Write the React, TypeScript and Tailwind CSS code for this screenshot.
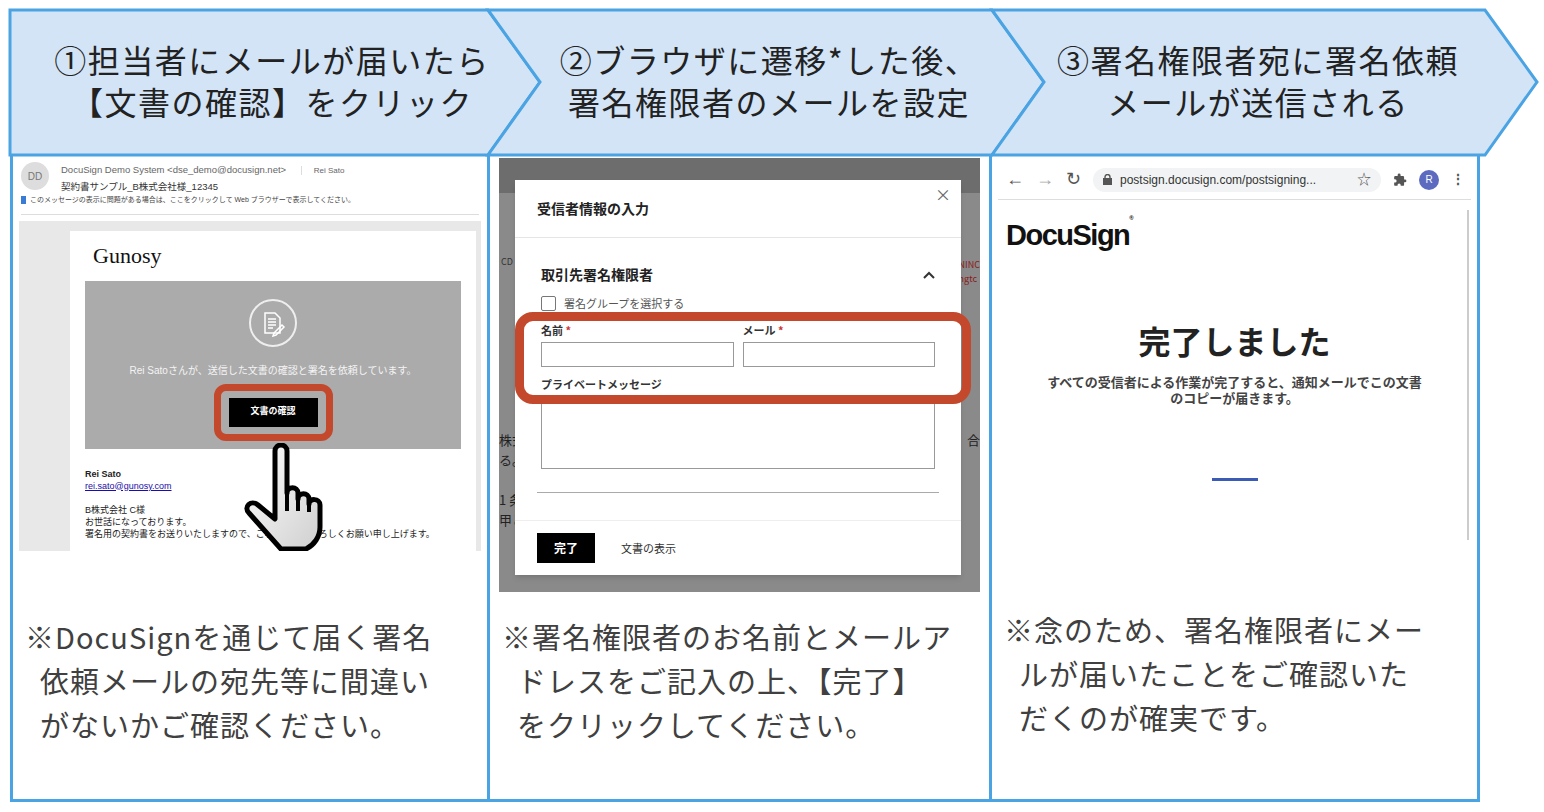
const jp = { fontFamily: '"Noto Sans CJK JP", "Noto Sans", sans-serif' };

function Chevrons() {
  return (
    <svg className="absolute left-0 top-0" width="1544" height="160" viewBox="0 0 1544 160">
      <g fill="#d2e4f6" stroke="#4aa3e2" strokeWidth="3" strokeLinejoin="miter">
        <polygon points="10,10 488,10 540,82 488,155 10,155" />
        <polygon points="488,10 992,10 1044,82 992,155 488,155 540,82" />
        <polygon points="992,10 1485,10 1537,82 1485,155 992,155 1044,82" />
      </g>
    </svg>
  );
}

function EmailShot() {
  return (
    <div className="mx-[6px] mt-[3px] h-[394px] bg-white text-[#444] relative overflow-hidden" style={{ fontFamily: '"Liberation Sans", "Noto Sans CJK JP", sans-serif' }}>
      <div className="flex gap-3 pl-[2px] pt-[4px]">
        <div className="w-[28px] h-[28px] rounded-full bg-[#ddd] text-[10px] text-[#777] flex items-center justify-center">DD</div>
        <div className="text-[9.5px] leading-[16px] text-[#666]">
          <div>DocuSign Demo System &lt;dse_demo@docusign.net&gt; <span className="ml-3 text-[8px] border-l border-[#ddd] pl-3">Rei Sato</span></div>
          <div className="text-[#333]">契約書サンプル_B株式会社様_12345</div>
        </div>
      </div>
      <div className="text-[7px] text-[#444] pl-[2px] flex items-center gap-1"><span className="w-[5px] h-[8px] bg-[#3a7bd5] inline-block" />このメッセージの表示に問題がある場合は、ここをクリックして Web ブラウザーで表示してください。</div>
      <div className="border-t border-[#ddd] mt-[8px] mx-[2px]" />
      <div className="bg-[#e8e8e8] mt-[6px] h-[330px] pl-[51px] pr-[5px] pt-[10px]">
        <div className="bg-white h-full px-[15px]">
          <div className="pt-[8px] pl-[8px] text-[22px] text-[#111] h-[50px]" style={{ fontFamily: '"Liberation Serif", serif' }}>Gunosy</div>
          <div className="bg-[#ababab] h-[168px] flex flex-col items-center pt-[18px]">
            <div className="w-[48px] h-[48px] rounded-full border-2 border-white/80 flex items-center justify-center">
              <svg width="26" height="28" viewBox="0 0 26 28" fill="none" stroke="white" strokeWidth="1.5">
                <path d="M5 4h10l5 5v15H5z" /><path d="M8 10h8M8 13h8M8 16h8M8 19h5" /><path d="M14 24l8-8 2 2-8 8-3 1z" />
              </svg>
            </div>
            <div className="text-[10px] text-[#f4f4f4] mt-[16px]">Rei Satoさんが、送信した文書の確認と署名を依頼しています。</div>
            <div className="mt-[6px] rounded-[12px] border-[7px] border-[#c4482c] px-[8px] py-[7px]">
              <div className="bg-black text-white text-[9px] font-bold w-[89px] h-[29px] flex items-center justify-center">文書の確認</div>
            </div>
          </div>
          <div className="text-[9px] leading-[12px] pt-[19px] text-[#222]">
            <div className="font-bold">Rei Sato</div>
            <div className="text-[#1a0dab] underline">rei.sato@gunosy.com</div>
            <div className="mt-[12px]">B株式会社 C様</div>
            <div>お世話になっております。</div>
            <div>署名用の契約書をお送りいたしますので、ご署名の程、よろしくお願い申し上げます。</div>
          </div>
        </div>
      </div>
      <svg className="absolute left-[218px] top-[285px]" width="100" height="108" viewBox="0 0 100 108">
        <defs><linearGradient id="hg" x1="0" y1="0" x2="1" y2="1"><stop offset="0" stopColor="#fff" /><stop offset="1" stopColor="#cfcfcf" /></linearGradient></defs>
        <path d="M38 8c0-8 12-8 12 0v42c0-7 11-7 11 0v6c0-7 11-7 11 0v5c0-6 11-6 11 1v22c0 10-6 18-14 22H44L12 70c-6-6 2-14 9-8l17 14z" fill="url(#hg)" stroke="#000" strokeWidth="5" strokeLinejoin="round" />
        <path d="M50 50v18M61 56v12M72 61v8" stroke="#000" strokeWidth="4" />
      </svg>
    </div>
  );
}

function DialogShot() {
  return (
    <div className="mx-[9px] mt-[3px] h-[434px] bg-[#6d6d6d] relative overflow-hidden" style={jp}>
      <div className="absolute left-0 right-0 top-[35px] bottom-0 bg-[#8a8a8a]" />
      <div className="absolute left-[2px] top-[97px] text-[9px] text-[#333]">CD</div>
      <div className="absolute right-0 top-[100px] text-[9px] text-[#8a1a1a] leading-[14px]">NINC<br />ngtc</div>
      <div className="absolute left-0 top-[272px] text-[13px] text-[#222] leading-[20px]">株式<br />る。<br /><br />1 条<br />甲と</div>
      <div className="absolute right-0 top-[272px] text-[13px] text-[#222]">合</div>
      <div className="absolute left-[16px] top-[22px] w-[446px] h-[395px] bg-white shadow-md flex flex-col">
        <div className="h-[58px] border-b border-[#e5e5e5] flex items-center px-[22px] relative">
          <span className="text-[14px] font-bold text-[#222]">受信者情報の入力</span>
          <span className="absolute right-[10px] top-[2px] text-[16px] text-[#666]">×</span>
        </div>
        <div className="px-[26px] pt-[26px] flex-1 border-b border-[#eee]">
          <div className="flex justify-between items-center">
            <span className="text-[14px] font-bold text-[#222]">取引先署名権限者</span>
            <svg width="12" height="8" viewBox="0 0 12 8"><path d="M1 7l5-5 5 5" stroke="#333" strokeWidth="2" fill="none" /></svg>
          </div>
          <div className="flex items-center gap-2 mt-[10px] text-[11px] text-[#555]">
            <span className="w-[15px] h-[15px] border border-[#777] rounded-[2px]" />署名グループを選択する
          </div>
          <div className="grid grid-cols-2 gap-[9px] mt-[10px] text-[11px] font-bold text-[#333]">
            <div>名前 <span className="text-[#c33]">*</span><div className="mt-[4px] h-[25px] border border-[#999]" /></div>
            <div>メール <span className="text-[#c33]">*</span><div className="mt-[4px] h-[25px] border border-[#999]" /></div>
          </div>
          <div className="mt-[9px] text-[11px] font-bold text-[#333]">プライベートメッセージ</div>
          <div className="mt-[10px] h-[66px] border border-[#999]" />
          <div className="mt-[23px] -mx-[4px] border-t border-[#aaa]" />
        </div>
        <div className="h-[54px] flex items-center px-[22px] gap-[26px]">
          <div className="bg-black text-white text-[12px] font-bold w-[58px] h-[30px] flex items-center justify-center">完了</div>
          <span className="text-[11px] text-[#333]">文書の表示</span>
        </div>
      </div>
      <div className="absolute left-[16px] top-[154px] w-[456px] h-[92px] rounded-[18px] border-[9px] border-[#c4482c]" />
    </div>
  );
}

function BrowserShot() {
  return (
    <div className="mx-[6px] mt-[5px] h-[385px] bg-white relative" style={{ fontFamily: '"Liberation Sans", "Noto Sans CJK JP", sans-serif' }}>
      <div className="h-[40px] flex items-center gap-[12px] pl-[8px] pr-[6px] border-b border-[#ddd]">
        <span className="text-[#555] text-[18px]">←</span>
        <span className="text-[#aaa] text-[18px]">→</span>
        <span className="text-[#555] text-[18px]">↻</span>
        <div className="flex-1 h-[24px] rounded-full bg-[#f1f3f4] flex items-center px-[10px] gap-[8px] text-[12px] text-[#333]">
          <svg width="9" height="11" viewBox="0 0 9 11"><rect x="0" y="4" width="9" height="7" fill="#555" /><path d="M2 4V3a2.5 2.5 0 015 0v1" stroke="#555" strokeWidth="1.4" fill="none" /></svg>
          <span className="flex-1">postsign.docusign.com/postsigning...</span>
          <span className="text-[#555] text-[14px]">☆</span>
        </div>
        <svg width="14" height="14" viewBox="0 0 24 24" fill="#555"><path d="M20.5 11H19V7a2 2 0 00-2-2h-4V3.5a2.5 2.5 0 00-5 0V5H4a2 2 0 00-2 2v3.8h1.5a2.7 2.7 0 010 5.4H2V20a2 2 0 002 2h3.8v-1.5a2.7 2.7 0 015.4 0V22H17a2 2 0 002-2v-4h1.5a2.5 2.5 0 000-5z" /></svg>
        <span className="w-[20px] h-[20px] rounded-full bg-[#5c6bc0] text-white text-[10px] flex items-center justify-center">R</span>
        <span className="text-[#555] text-[14px] font-bold">⋮</span>
      </div>
      <div className="absolute right-[2px] top-[50px] w-[2px] h-[330px] bg-[#ccc]" />
      <div className="pl-[8px] pt-[14px] text-[29px] font-bold tracking-[-1.5px] text-[#111]">DocuSign<span className="text-[6px] align-top">®</span></div>
      <div className="text-center mt-[58px] text-[32px] font-bold text-[#222]" style={jp}>完了しました</div>
      <div className="text-center px-[10px] mt-[10px] text-[13px] font-bold text-[#444] leading-[16px]" style={jp}>すべての受信者による作業が完了すると、通知メールでこの文書<br />のコピーが届きます。</div>
      <div className="mx-auto mt-[72px] w-[46px] h-[3px] bg-[#3b5bb5]" />
    </div>
  );
}

function Note({ children }: { children: React.ReactNode }) {
  return <div className="pl-[12px] pr-[4px] pt-[62px] text-[29px] leading-[44px] text-[#404040] tracking-[1px]" style={jp}>{children}</div>;
}

export default function App() {
  return (
    <div className="w-[1544px] h-[812px] bg-white relative overflow-hidden">
      <Chevrons />
      <div className="relative grid grid-cols-[480px_502px_488px] ml-[10px] h-[155px] pt-[10px] tracking-[1.5px]" style={jp}>
        <div className="text-[32px] leading-[42px] text-[#222] text-center pt-[28px] pl-[44px] whitespace-nowrap">①担当者にメールが届いたら<br />【文書の確認】をクリック</div>
        <div className="text-[32px] leading-[42px] text-[#222] text-center pt-[28px] pl-[56px] whitespace-nowrap">②ブラウザに遷移*した後、<br />署名権限者のメールを設定</div>
        <div className="text-[32px] leading-[42px] text-[#222] text-center pt-[28px] pl-[44px] whitespace-nowrap">③署名権限者宛に署名依頼<br />メールが送信される</div>
      </div>
      <div className="grid grid-cols-[480px_502px_488px] ml-[10px] h-[647px] relative">
        <div className="border-x-[3px] border-b-[3px] border-[#4aa3e2]">
          <EmailShot />
          <Note>※DocuSignを通じて届く署名<br />&nbsp;&nbsp;依頼メールの宛先等に間違い<br />&nbsp;&nbsp;がないかご確認ください。</Note>
        </div>
        <div className="border-r-[3px] border-b-[3px] border-[#4aa3e2]">
          <DialogShot />
          <div className="-mt-[40px]"><Note>※署名権限者のお名前とメールア<br />&nbsp;&nbsp;ドレスをご記入の上、【完了】<br />&nbsp;&nbsp;をクリックしてください。</Note></div>
        </div>
        <div className="border-r-[3px] border-b-[3px] border-[#4aa3e2]">
          <BrowserShot />
          <Note>※念のため、署名権限者にメー<br />&nbsp;&nbsp;ルが届いたことをご確認いた<br />&nbsp;&nbsp;だくのが確実です。</Note>
        </div>
      </div>
    </div>
  );
}
